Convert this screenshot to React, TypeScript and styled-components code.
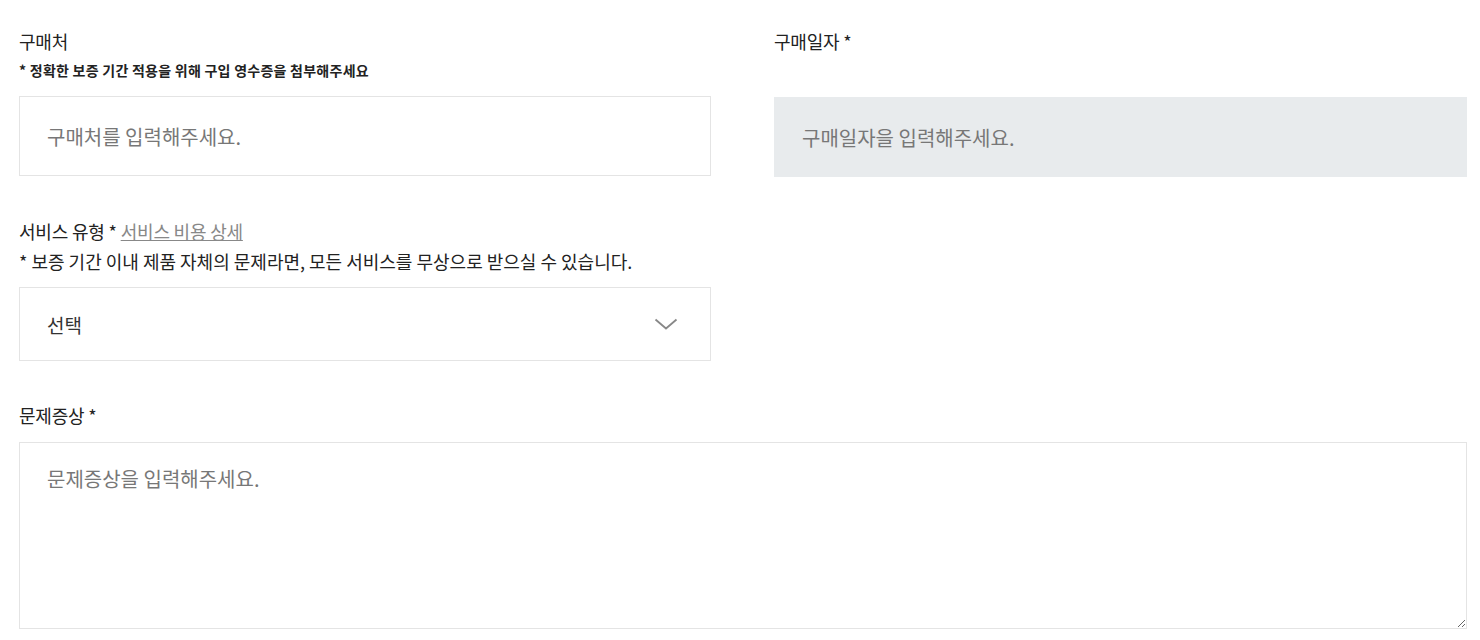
import React from "react";
import styled, { createGlobalStyle } from "styled-components";

const Global = createGlobalStyle`
  html, body { margin: 0; padding: 0; background: #fff; }
  body { font-family: "Noto Sans CJK KR", "Noto Sans", sans-serif; color: #222; }
  * { box-sizing: border-box; }
`;

const Page = styled.div`
  padding: 28px 13px 12px 19px;
  width: 1480px;
`;

const Grid = styled.div`
  display: grid;
  grid-template-columns: 692px 1fr;
  column-gap: 63px;
  row-gap: 41px;
`;

const Field = styled.div<{ $full?: boolean }>`
  display: flex;
  flex-direction: column;
  grid-column: ${(p) => (p.$full ? "1 / -1" : "auto")};
`;

const Label = styled.div`
  font-size: 18px;
  line-height: 26px;
  letter-spacing: -0.2px;
  color: #222;
`;

const Note = styled.div<{ $bold?: boolean; $size: number }>`
  font-size: ${(p) => p.$size}px;
  font-weight: ${(p) => (p.$bold ? 700 : 400)};
  letter-spacing: ${(p) => (p.$bold ? "0.25px" : "0px")};
  line-height: ${(p) => (p.$bold ? "20px" : "30px")};
  color: #222;
`;

const LinkText = styled.a`
  color: #888;
  text-decoration: underline;
  margin-left: 4px;
`;

const Spacer = styled.div<{ $h: number }>`
  height: ${(p) => p.$h}px;
`;

const TextInput = styled.input<{ $disabled?: boolean }>`
  width: 100%;
  height: 80px;
  border: 1px solid ${(p) => (p.$disabled ? "#e8ebed" : "#e4e4e4")};
  background: ${(p) => (p.$disabled ? "#e8ebed" : "#fff")};
  padding: 0 27px;
  font-family: inherit;
  font-size: 20px;
  letter-spacing: 0px;
  color: #222;
  outline: none;
  &::placeholder { color: #777; }
`;

const SelectBox = styled.div`
  height: 74px;
  border: 1px solid #e4e4e4;
  display: flex;
  align-items: center;
  justify-content: space-between;
  padding: 0 32px 0 27px;
  font-size: 19px;
  letter-spacing: 0px;
  color: #333;
`;

const TextArea = styled.textarea`
  width: 100%;
  height: 187px;
  border: 1px solid #e4e4e4;
  padding: 21px 27px;
  font-family: inherit;
  font-size: 20px;
  letter-spacing: 0px;
  color: #222;
  outline: none;
  display: block;
  &::placeholder { color: #777; }
`;

const Chevron = () => (
  <svg width="24" height="12" viewBox="0 0 24 12" fill="none">
    <path d="M1.5 1.5 L12 10.5 L22.5 1.5" stroke="#888" strokeWidth="1.8" />
  </svg>
);

export default function App() {
  return (
    <>
      <Global />
      <Page>
        <Grid>
          <Field>
            <Label>구매처</Label>
            <Spacer $h={6} />
            <Note $bold $size={14}>* 정확한 보증 기간 적용을 위해 구입 영수증을 첨부해주세요</Note>
            <Spacer $h={16} />
            <TextInput placeholder="구매처를 입력해주세요." />
          </Field>
          <Field>
            <Label>구매일자 *</Label>
            <Spacer $h={43} />
            <TextInput $disabled placeholder="구매일자을 입력해주세요." readOnly />
          </Field>
          <Field>
            <Label>
              서비스 유형 *<LinkText>서비스 비용 상세</LinkText>
            </Label>
            <Spacer $h={2} />
            <Note $size={18}>* 보증 기간 이내 제품 자체의 문제라면, 모든 서비스를 무상으로 받으실 수 있습니다.</Note>
            <Spacer $h={11} />
            <SelectBox>
              <span>선택</span>
              <Chevron />
            </SelectBox>
          </Field>
          <div />
          <Field $full>
            <Label>문제증상 *</Label>
            <Spacer $h={14} />
            <TextArea placeholder="문제증상을 입력해주세요." />
          </Field>
        </Grid>
      </Page>
    </>
  );
}
